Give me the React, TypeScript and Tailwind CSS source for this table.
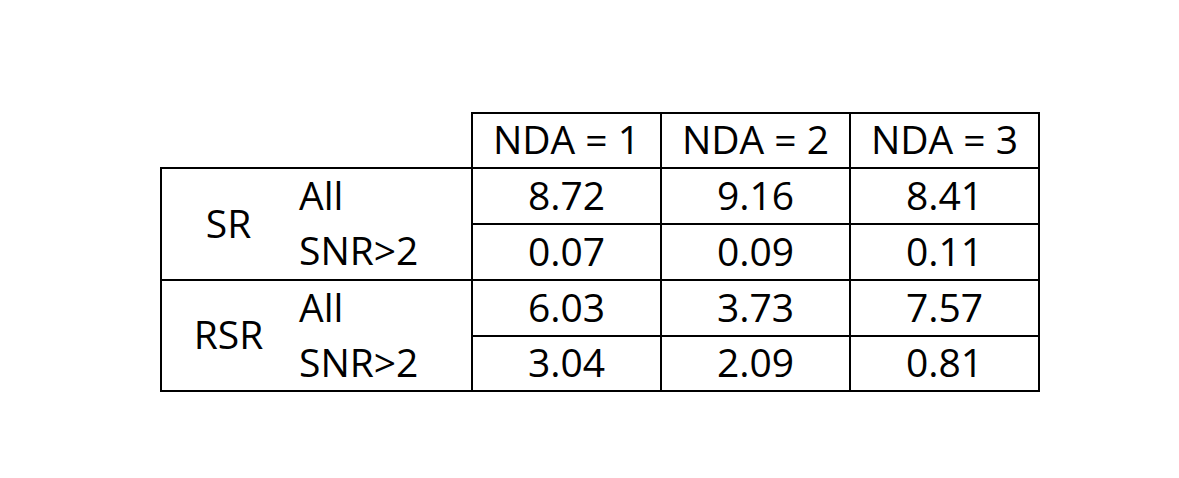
const head = ["NDA = 1", "NDA = 2", "NDA = 3"];

const groups = [
  {
    name: "SR",
    rows: [
      { label: "All", values: ["8.72", "9.16", "8.41"] },
      { label: "SNR>2", values: ["0.07", "0.09", "0.11"] },
    ],
  },
  {
    name: "RSR",
    rows: [
      { label: "All", values: ["6.03", "3.73", "7.57"] },
      { label: "SNR>2", values: ["3.04", "2.09", "0.81"] },
    ],
  },
];

export default function App() {
  return (
    <div className="w-[1179px] h-[478px] bg-white pt-[112px] pl-[160px] text-black font-['Open_Sans',sans-serif] text-[39px] leading-none">
      <table className="border-collapse">
        <thead>
          <tr className="h-[55px]">
            <td colSpan={2} className="w-[311px] p-0" />
            {head.map((h) => (
              <th key={h} className="w-[189px] p-0 pb-[4px] border-2 border-black font-normal text-center align-middle">
                {h}
              </th>
            ))}
          </tr>
        </thead>
        <tbody>
          {groups.map((g) =>
            g.rows.map((r, i) => (
              <tr key={g.name + r.label} className={i === 0 || g.name === "SR" ? "h-[56px]" : "h-[55px]"}>
                {i === 0 && (
                  <td rowSpan={2} className="w-[134px] p-0 pb-[4px] border-l-2 border-t-2 border-b-2 border-black text-center align-middle">
                    {g.name}
                  </td>
                )}
                <td className={`w-[177px] p-0 pl-[4px] pb-[4px] border-r-2 border-black text-left align-middle ${i === 0 ? "border-t-2" : "border-b-2"}`}>
                  {r.label}
                </td>
                {r.values.map((v, j) => (
                  <td key={j} className="p-0 pb-[4px] border-2 border-black text-center align-middle">
                    {v}
                  </td>
                ))}
              </tr>
            ))
          )}
        </tbody>
      </table>
    </div>
  );
}
